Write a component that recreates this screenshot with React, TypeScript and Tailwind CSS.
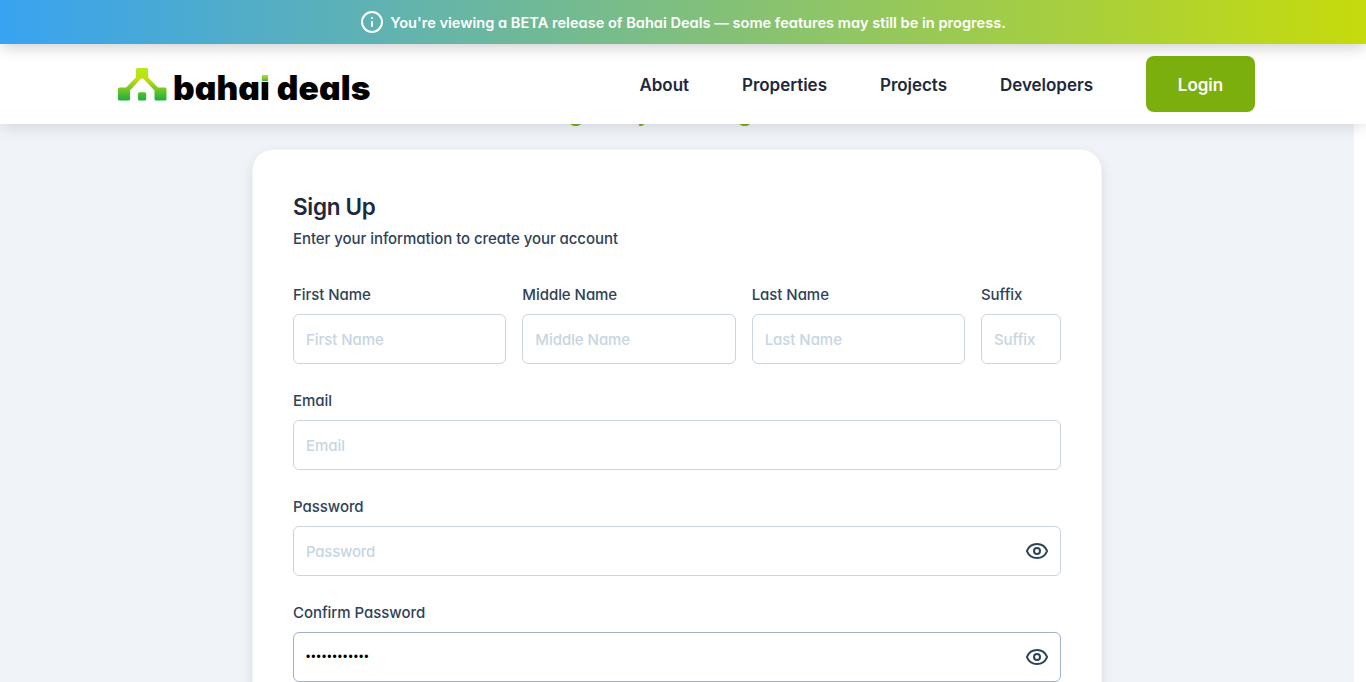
import { useState } from "react";
import { Eye, Info } from "lucide-react";

const fieldLabel = "block h-5 text-[15px] leading-5 font-medium tracking-[-0.05px] text-[#2f4257]";
const fieldInput =
  "mt-[9px] block h-[50px] w-full rounded-md border border-[#cbd5e1] bg-white px-3 text-[15px] font-medium tracking-[-0.05px] text-black outline-none placeholder:text-[#c8d5e2]";

function Logo() {
  return (
    <a href="#" className="flex h-10 items-center">
      <svg width="49" height="34" viewBox="0 0 49 34" className="mt-[1px] shrink-0">
        <defs>
          <linearGradient id="roof" x1="0" y1="0" x2="0" y2="33" gradientUnits="userSpaceOnUse">
            <stop offset="0" stopColor="#b4ea18" />
            <stop offset="0.35" stopColor="#c3dd0e" />
            <stop offset="1" stopColor="#16ad40" />
          </linearGradient>
        </defs>
        <path
          fill="url(#roof)"
          d="M19.500 0h9q1.500 0 1.500 1.500V9.300L40 19.500h7q1.500 0 1.500 1.500v10q0 1.500-1.500 1.500h-9q-1.500 0-1.500-1.500V22.500L25.500 11q-1.500-1.500-3 0L12 22.500V31q0 1.500-1.500 1.500h-9Q0 32.500 0 31V21q0-1.500 1.500-1.500H8L18 9.300V1.500Q18 0 19.500 0Z"
        />
        <rect x="20" y="24.300" width="8.200" height="8.200" rx="1.500" fill="url(#roof)" />
      </svg>
      <span className="mt-[8px] ml-[6px] flex text-[33.5px] leading-10 font-black tracking-[0.1px] whitespace-pre text-black">
        baha
        <span className="relative bg-[linear-gradient(to_bottom,transparent_13px,#000_13px)] bg-clip-text text-transparent">
          i
          <span className="absolute top-[7px] left-[1.5px] h-[6px] w-[6.5px] bg-linear-to-b from-[#c3dd0e] to-[#2bb53c]" />
        </span>
        {" deals"}
      </span>
    </a>
  );
}

function Field({ label }: { label: string }) {
  return (
    <label className="block">
      <span className={fieldLabel}>{label}</span>
      <input className={fieldInput} placeholder={label} />
    </label>
  );
}

function PasswordField({ label, filled = false }: { label: string; filled?: boolean }) {
  const [visible, setVisible] = useState(false);
  return (
    <div>
      <span className={`${fieldLabel} tracking-[-0.2px]`}>{label}</span>
      <div
        className={`mt-[9px] flex h-[50px] items-center justify-between rounded-md border px-3 ${
          filled ? "border-[#a3b1c6]" : "border-[#cbd5e1]"
        }`}
      >
        {filled ? (
          <span className="font-['Liberation_Sans',sans-serif] text-[12px] tracking-[1.1px] text-black">••••••••••••</span>
        ) : (
          <input
            type={visible ? "text" : "password"}
            placeholder={label}
            className="h-6 flex-1 bg-transparent text-[15px] font-medium tracking-[-0.25px] outline-none placeholder:text-[#c8d5e2]"
          />
        )}
        <button type="button" onClick={() => setVisible(!visible)} className="-mr-[1px] text-[#2f4257]">
          <Eye size={24} />
        </button>
      </div>
    </div>
  );
}

export default function App() {
  return (
    <div className="flex h-[682px] w-[1366px] flex-col overflow-hidden bg-white font-['Inter',sans-serif] [font-feature-settings:'cv11']">
      <div className="z-20 flex h-11 shrink-0 items-center justify-center gap-[6px] bg-linear-to-r/srgb from-[#38a3f1] to-[#c6db0c] text-white shadow-[0_4px_15px_-1px_rgba(0,0,0,0.2)]">
        <Info size={24} />
        <p className="pt-[2px] text-[14.6px] leading-6 font-semibold whitespace-nowrap">
          You're viewing a BETA release of Bahai Deals — some features may still be in progress.
        </p>
      </div>

      <header className="z-10 flex h-20 shrink-0 items-center justify-between bg-white pr-[111px] pl-[118px] shadow-[0_4px_15px_-2px_rgba(0,0,0,0.15)]">
        <Logo />
        <nav className="flex items-center gap-[53px] text-[17px] font-semibold tracking-[-0.03px] text-[#1e293b]">
          <a href="#" className="pt-1">About</a>
          <a href="#" className="pt-1">Properties</a>
          <a href="#" className="pt-1">Projects</a>
          <a href="#" className="pt-1">Developers</a>
          <a href="#" className="flex h-14 w-[109px] items-center justify-center rounded-lg bg-[#7baf0d] pt-1 text-white">
            Login
          </a>
        </nav>
      </header>

      <main className="flex w-[1354px] flex-1 flex-col items-center overflow-hidden bg-[#f0f4f9]">
        <h2 className="-mt-[25px] h-[51px] shrink-0 pr-[62px] text-[24px] leading-[28px] font-medium tracking-[-0.4px] text-[#7baf0d]">
          Register your living
        </h2>
        <section className="-mt-[1px] h-[600px] w-[850px] shrink-0 rounded-[21px] border border-[#f1f5f9] bg-white px-10 pt-[41px] shadow-[0_4px_12px_rgba(15,23,42,0.1)]">
          <h1 className="text-[22.5px] leading-8 font-semibold tracking-[-0.3px] text-[#1e293b]">Sign Up</h1>
          <p className="text-[15px] leading-8 font-medium tracking-[-0.06px] text-[#2f4257]">Enter your information to create your account</p>
          <form className="mt-[30px] flex flex-col gap-[27px]">
            <div className="grid grid-cols-[1fr_1fr_1fr_80px] gap-4">
              <Field label="First Name" />
              <Field label="Middle Name" />
              <Field label="Last Name" />
              <Field label="Suffix" />
            </div>
            <Field label="Email" />
            <PasswordField label="Password" />
            <PasswordField label="Confirm Password" filled />
          </form>
        </section>
      </main>
    </div>
  );
}
